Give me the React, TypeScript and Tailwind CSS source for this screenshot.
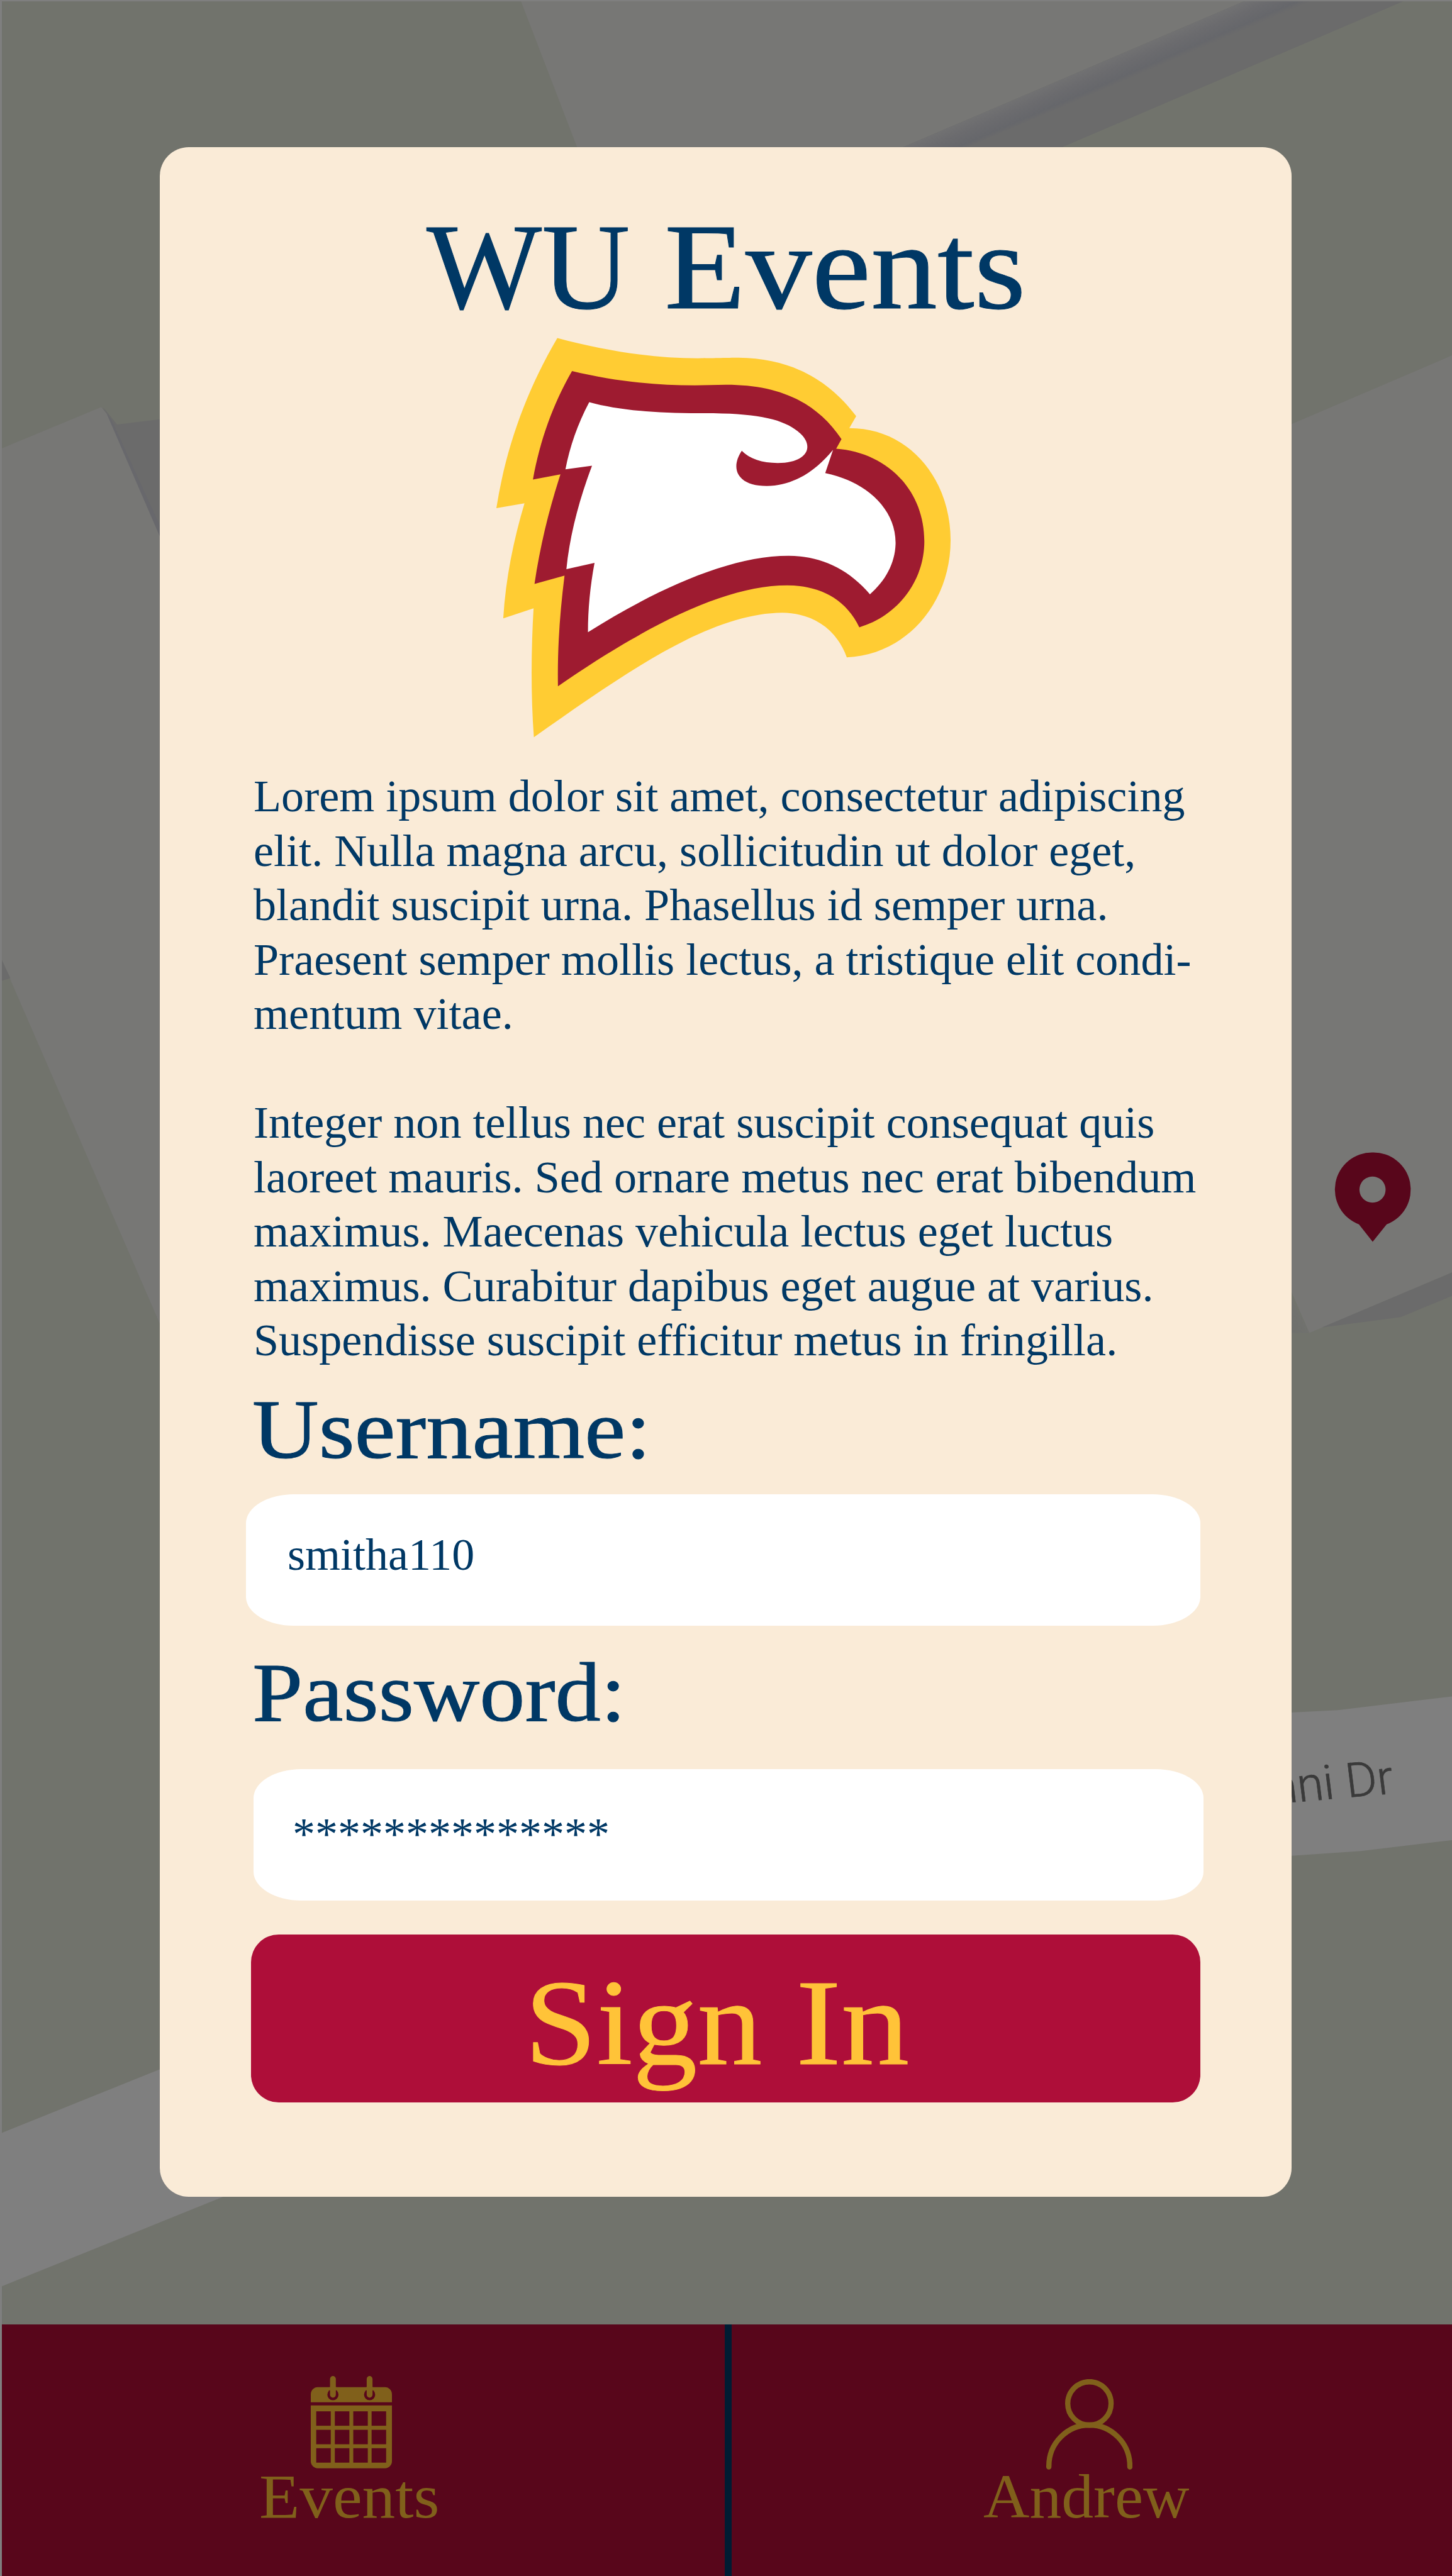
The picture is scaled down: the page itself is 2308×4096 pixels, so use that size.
import React from "react";

const schoolbook = "font-['Liberation_Serif',serif]";

function MapBackdrop() {
  return (
    <svg
      viewBox="0 0 2667 4733"
      preserveAspectRatio="none"
      className="absolute inset-0 h-full w-full"
      aria-hidden="true"
    >
      <defs>
        <linearGradient id="shadeTop" gradientUnits="userSpaceOnUse" x1="1976" y1="135" x2="1994" y2="177">
          <stop offset="0" stopColor="#717172" />
          <stop offset="0.4" stopColor="#6b6b6e" />
          <stop offset="0.85" stopColor="#66676b" />
          <stop offset="1" stopColor="#6a6a6b" />
        </linearGradient>
        <linearGradient id="shadeCorner" x1="0" y1="1" x2="1" y2="0">
          <stop offset="0" stopColor="#6d6e6b" />
          <stop offset="1" stopColor="#747571" />
        </linearGradient>
      </defs>
      <rect width="2667" height="4733" fill="#71736c" />
      <polygon points="956,0 2291,0 1543,320 1079,320" fill="#777775" />
      <polygon points="2291,0 2583,0 1835,320 1543,320" fill="#6b6b6b" />
      <polygon points="2291,0 2412,0 1660,320 1543,320" fill="url(#shadeTop)" />
      <polygon points="2340,793 2667,653 2667,2338 2405,2449 2340,2300" fill="#777775" />
      <polygon points="2360,2360 2405,2449 2360,2449" fill="url(#shadeCorner)" />
      <polygon points="2428,2439 2573,2420 2667,2381 2667,2338" fill="#6b6b6b" />
      <polygon points="190,749 215,780 330,766 330,1075" fill="#6b6b6b" />
      <polygon points="188,749 205,772 330,1045 330,1080" fill="#68686c" />
      <polygon points="3,824 186,748 196,760 330,1070 330,2516 3,1763" fill="#777775" />
      <polygon points="3,1763 19,1797 3,1802" fill="#6b6b6b" />
      <polygon points="3,3919 450,3739 450,4020 3,4201" fill="#7f7f7f" />
      <polygon points="2340,3148 2457,3142 2667,3117 2667,3381 2500,3401 2340,3412" fill="#7f7f7f" />
      <text
        transform="translate(2562 3295) rotate(-5) skewX(2)"
        textAnchor="end"
        fontSize="88"
        className="font-['Roboto',sans-serif] font-light"
        fill="#3a3a3a"
        stroke="#3a3a3a"
        strokeWidth="0.8"
      >
        mni Dr
      </text>
      <rect width="2667" height="2.5" fill="#7f7f7f" />
      <rect width="3.5" height="4733" fill="#7f7f7f" />
      <path
        fillRule="evenodd"
        fill="#58061b"
        d="M2521 2117.5a68.2 68.2 0 0 1 26 132L2521.3 2281.5L2496 2249.5A68.2 68.2 0 0 1 2521 2117.5ZM2521 2161.7a24 24 0 1 0 .01 0Z"
      />
    </svg>
  );
}

function EagleLogo() {
  return (
    <svg
      viewBox="55 62 1453 1478"
      preserveAspectRatio="none"
      className="ml-[535px] mt-[13px] h-[636px] w-[722px] shrink-0"
      aria-hidden="true"
    >
      <path
        fill="#ffcc33"
        d="M250 63C410 112 560 138 700 138C760 138 790 136 830 136C1000 138 1120 220 1206 352L1184 396C1380 396 1508 590 1508 810C1508 1050 1360 1235 1176 1243C1140 1130 1060 1080 970 1078C740 1080 480 1290 175 1538C165 1380 166 1220 174 1062L77 1099C85 950 110 810 145 674L55 692C85 470 150 260 250 63Z"
      />
      <path
        fill="#9e1b30"
        d="M297 185C430 222 560 238 690 238L790 236C960 236 1080 300 1159 437L1142 472C1300 485 1424 620 1424 815C1424 960 1340 1090 1216 1132C1170 1020 1080 977 985 977C790 977 540 1120 252 1350C250 1210 258 1080 273 941L177 972C195 830 225 690 260 567L172 586C195 440 235 310 297 185Z"
      />
      <path
        fill="#ffffff"
        d="M352 300C440 328 560 342 720 341C880 341 960 360 1010 400C1080 455 1055 525 955 525C905 525 865 510 840 480C800 550 830 610 920 610C1010 608 1080 550 1132 476L1107 562C1230 590 1335 690 1332 825C1330 895 1300 960 1250 1010C1180 915 1090 868 990 868C800 868 570 990 348 1150C348 1065 355 980 369 894L279 917C290 790 320 660 361 535L276 548C290 465 315 380 352 300Z"
      />
    </svg>
  );
}

const columns = [542, 644.5, 746, 847];
const rows = [679, 779, 878.5];

function CalendarIcon() {
  return (
    <svg viewBox="512 488 447 500" preserveAspectRatio="none" className="h-[147px] w-[129px]" aria-hidden="true">
      <g fill="#80601b">
        <path d="M512 630V588A38 40 0 0 1 550 548H921A38 40 0 0 1 959 588V630Z" />
        <path d="M512 647H959V948A38 39 0 0 1 921 987H550A38 39 0 0 1 512 948Z" />
      </g>
      <g fill="#58061b">
        {rows.map((y) => columns.map((x) => <rect key={`${x}-${y}`} x={x} y={y} width="80" height="78" />))}
        <circle cx="634" cy="588.5" r="30.5" />
        <circle cx="836" cy="588.5" r="30.5" />
      </g>
      <g fill="#80601b">
        <rect x="615" y="548" width="38" height="17" />
        <rect x="817" y="548" width="38" height="17" />
        <rect x="618" y="488" width="32" height="117" rx="16" />
        <rect x="820" y="488" width="32" height="117" rx="16" />
      </g>
    </svg>
  );
}

function PersonIcon() {
  return (
    <svg viewBox="516 505 476 490" preserveAspectRatio="none" className="h-[144px] w-[137.3px]" aria-hidden="true">
      <g fill="none" stroke="#80601b" strokeWidth="29" strokeLinecap="round">
        <ellipse cx="754" cy="636.5" rx="119.5" ry="117.5" />
        <path d="M530.5 980V976A223.250 223 0 0 1 977 976V980" />
      </g>
    </svg>
  );
}

export default function App() {
  return (
    <div className={`relative flex h-[4096px] w-[2308px] flex-col overflow-hidden text-[#003865] ${schoolbook}`}>
      <MapBackdrop />
      <div className="flex-1" />
      <nav className="relative ml-[3px] flex h-[400px] shrink-0 text-[99px] leading-[98px] text-[#80601b]">
        <a className="w-[1149px] bg-[#58061b]">
          <div className="ml-[491px] mt-[82px]">
            <CalendarIcon />
          </div>
          <div className="ml-[409px] mt-[-4px] w-max origin-left scale-x-[1.063]">Events</div>
        </a>
        <div className="w-[11px] bg-[#001c33]" />
        <a className="flex-1 bg-[#58061b]">
          <div className="ml-[500px] mt-[87px]">
            <PersonIcon />
          </div>
          <div className="ml-[400px] mt-[-6px] w-max origin-left scale-x-[1.027]">Andrew</div>
        </a>
      </nav>

      <section className="absolute left-[254px] top-[234px] flex h-[3259px] w-[1799px] flex-col items-start rounded-[46px] bg-[#faebd7] pt-[90px]">
        <h1 className="ml-[424px] flex whitespace-pre text-[195px] leading-[200px] [-webkit-text-stroke:1px_currentColor]">
          <span className="w-[378px] origin-left scale-x-[0.995]">WU </span>
          <span className="origin-left scale-x-[1.083]">Events</span>
        </h1>
        <EagleLogo />
        <div className="ml-[149px] mt-[50px] whitespace-nowrap text-[72.150px] leading-[86.500px]">
          <p>
            Lorem ipsum dolor sit amet, consectetur adipiscing
            <br />
            elit. Nulla magna arcu, sollicitudin ut dolor eget,
            <br />
            blandit suscipit urna. Phasellus id semper urna.
            <br />
            Praesent semper mollis lectus, a tristique elit condi-
            <br />
            mentum vitae.
          </p>
          <p className="mt-[86.500px]">
            Integer non tellus nec erat suscipit consequat quis
            <br />
            laoreet mauris. Sed ornare metus nec erat bibendum
            <br />
            maximus. Maecenas vehicula lectus eget luctus
            <br />
            maximus. Curabitur dapibus eget augue at varius.
            <br />
            Suspendisse suscipit efficitur metus in fringilla.
          </p>
        </div>
        <label className="ml-[147px] mt-[29px] w-max origin-left scale-x-[1.092] text-[134px] leading-[139px] [-webkit-text-stroke:1px_currentColor]">
          Username:
        </label>
        <div className="ml-[137px] mt-[33px] h-[209px] w-[1517px] rounded-[76px/46px] bg-white pl-[66px] pt-[60px] text-[72px] leading-[72px]">
          smitha110
        </div>
        <label className="ml-[147px] mt-[37px] w-max origin-left scale-x-[1.078] text-[134px] leading-[139px] [-webkit-text-stroke:1px_currentColor]">
          Password:
        </label>
        <div className="ml-[149px] mt-[52px] h-[209px] w-[1510px] rounded-[76px/46px] bg-white pl-[62px] pt-[67px] text-[72px] leading-[72px]">
          **************
        </div>
        <button className="ml-[145px] mt-[54px] flex h-[267px] w-[1509px] items-start whitespace-pre rounded-[44px] bg-[#ae0e39] pl-[435px] pt-[40px] text-left text-[195px] leading-[200px] text-[#ffc338] [-webkit-text-stroke:1px_currentColor]">
          <span className="w-[431px] origin-left scale-x-[1.055]">Sign </span>
          <span className="origin-left scale-x-[1.110]">In</span>
        </button>
      </section>
    </div>
  );
}
